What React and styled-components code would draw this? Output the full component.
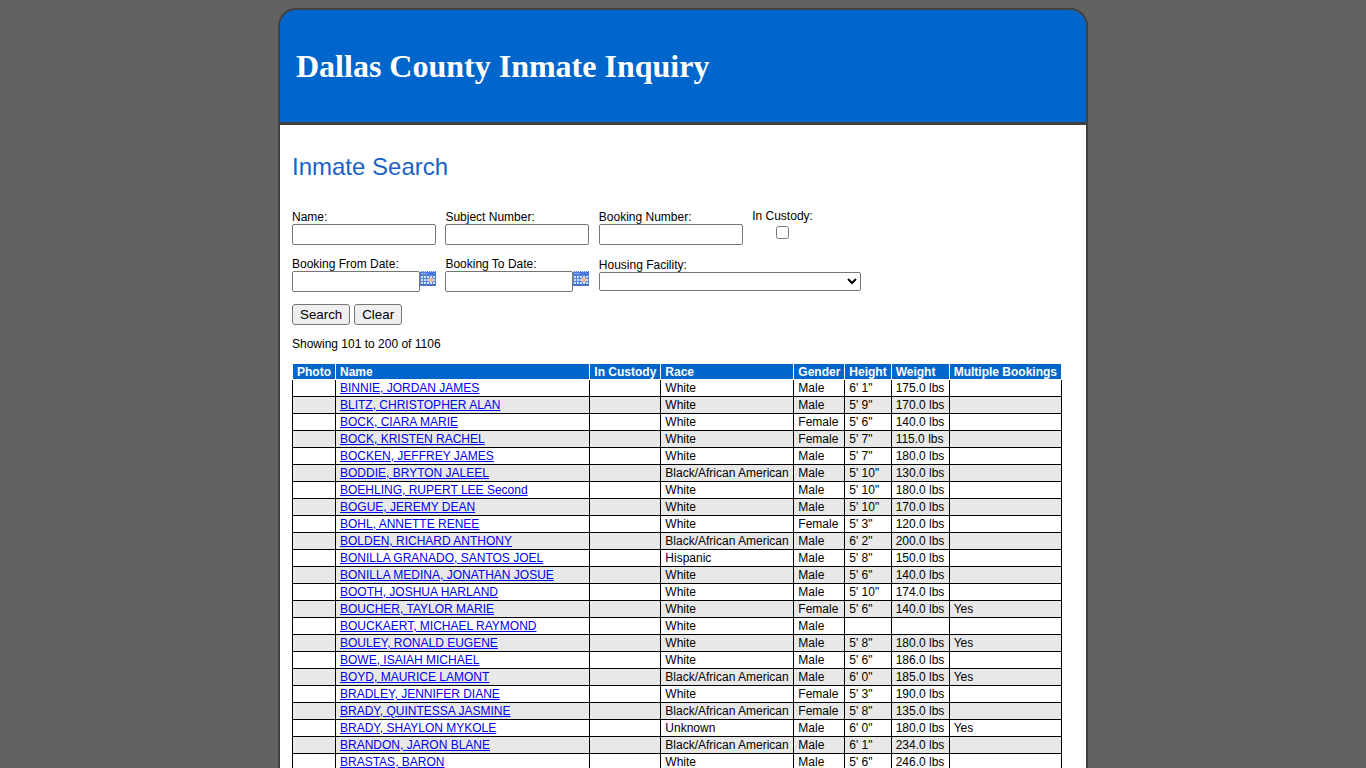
import React from 'react';
import styled, { createGlobalStyle } from 'styled-components';

const GlobalStyle = createGlobalStyle`
	body {
		margin: 8px;
		background: #616161;
		color: #000;
		font-family: Arial, "Liberation Sans", sans-serif;
		font-size: 12px;
		line-height: 14px;
	}
`;
const Page = styled.div`
	box-sizing: border-box;
	max-width: 810px;
	margin: 0 auto;
	border: 2px solid #404040;
	border-radius: 18px 18px 0 0;
`;
const Header = styled.header`
	display: flex;
	align-items: center;
	height: 112px;
	padding: 0 16px;
	background: #0066cc;
	border-bottom: 3px solid #404040;
	border-radius: 16px 16px 0 0;
`;
const SiteTitle = styled.h1`
	margin: 0;
	color: #fff;
	font-family: "Times New Roman", "Liberation Serif", serif;
	font-size: 32px;
	line-height: 36px;
`;
const Content = styled.main`
	padding: 28px 12px 12px;
	background: #fff;
`;
const PageTitle = styled.h2`
	margin: 0 0 29px;
	color: #1b62c4;
	font-size: 24px;
	font-weight: normal;
	line-height: 28px;
`;
const SearchForm = styled.form`
	display: grid;
	grid-template-columns: repeat(5, 1fr);
	row-gap: 12px;
	max-width: 767px;
`;
const Field = styled.div`
	display: flex;
	flex-direction: column;
	align-items: flex-start;
	justify-content: center;
	grid-column: span ${props => props.$span || 1};
`;
const CheckField = styled.div`
	display: flex;
	flex-direction: column;
	align-items: center;
	justify-self: start;
	line-height: 12px;
`;
const TextBox = styled.input`
	box-sizing: border-box;
	width: ${props => props.$short ? '128px' : '144px'};
	height: 21px;
	margin: 0;
	padding: 1px 2px;
	border: 1px solid #767676;
	border-radius: 2px;
	background: #fff;
`;
const CheckBox = styled.input`
	width: 13px;
	height: 13px;
	margin: 4px 3px 3px;
`;
const Select = styled.select`
	box-sizing: border-box;
	width: 262px;
	height: 19px;
	margin: 0;
	border: 1px solid #767676;
	border-radius: 2px;
	background-color: #fff;
`;
const DateRow = styled.div`
	display: flex;
	align-items: flex-start;
`;
const DateButton = styled.button`
	width: 16px;
	height: 15px;
	padding: 0;
	border: none;
	background: none;
	cursor: pointer;
	svg {
		display: block;
	}
`;
const Actions = styled.div`
	display: flex;
	grid-column: 1 / -1;
	gap: 4px;
`;
const Button = styled.button`
	height: 21px;
	padding: 0 7px;
	border: 1px solid #767676;
	border-radius: 3px;
	background: #efefef;
	color: #000;
	font-family: Arial, "Liberation Sans", sans-serif;
`;
const Summary = styled.p`
	margin: 12px 0;
`;
const Table = styled.table`
	width: 100%;
	max-width: 770px;
	border-collapse: collapse;
`;
const HeadCell = styled.th`
	width: ${props => props.$width}px;
	padding: 1px 4px 0;
	border: 1px solid #fff;
	background: #0066cc;
	color: #fff;
	line-height: 14px;
	text-align: left;
	white-space: nowrap;
`;
const Row = styled.tr`
	background: #fff;
	&:nth-child(even) {
		background: #e8e8e8;
	}
`;
const Cell = styled.td`
	height: 16px;
	padding: 0 4px;
	border: 1px solid #000;
	line-height: 16px;
	white-space: nowrap;
	tr:first-child > & {
		border-top-color: #fff;
	}
`;
const NameLink = styled.a`
	color: #0000ee;
`;

const columns = [
	['Photo', 34],
	['Name', 247],
	['In Custody', 62],
	['Race', 124],
	['Gender', 42],
	['Height', 36],
	['Weight', 49],
	['Multiple Bookings', 103],
];

const inmates = [
	['BINNIE, JORDAN JAMES', 'White', 'Male', '6\' 1"', '175.0 lbs'],
	['BLITZ, CHRISTOPHER ALAN', 'White', 'Male', '5\' 9"', '170.0 lbs'],
	['BOCK, CIARA MARIE', 'White', 'Female', '5\' 6"', '140.0 lbs'],
	['BOCK, KRISTEN RACHEL', 'White', 'Female', '5\' 7"', '115.0 lbs'],
	['BOCKEN, JEFFREY JAMES', 'White', 'Male', '5\' 7"', '180.0 lbs'],
	['BODDIE, BRYTON JALEEL', 'Black/African American', 'Male', '5\' 10"', '130.0 lbs'],
	['BOEHLING, RUPERT LEE Second', 'White', 'Male', '5\' 10"', '180.0 lbs'],
	['BOGUE, JEREMY DEAN', 'White', 'Male', '5\' 10"', '170.0 lbs'],
	['BOHL, ANNETTE RENEE', 'White', 'Female', '5\' 3"', '120.0 lbs'],
	['BOLDEN, RICHARD ANTHONY', 'Black/African American', 'Male', '6\' 2"', '200.0 lbs'],
	['BONILLA GRANADO, SANTOS JOEL', 'Hispanic', 'Male', '5\' 8"', '150.0 lbs'],
	['BONILLA MEDINA, JONATHAN JOSUE', 'White', 'Male', '5\' 6"', '140.0 lbs'],
	['BOOTH, JOSHUA HARLAND', 'White', 'Male', '5\' 10"', '174.0 lbs'],
	['BOUCHER, TAYLOR MARIE', 'White', 'Female', '5\' 6"', '140.0 lbs', 'Yes'],
	['BOUCKAERT, MICHAEL RAYMOND', 'White', 'Male', '', ''],
	['BOULEY, RONALD EUGENE', 'White', 'Male', '5\' 8"', '180.0 lbs', 'Yes'],
	['BOWE, ISAIAH MICHAEL', 'White', 'Male', '5\' 6"', '186.0 lbs'],
	['BOYD, MAURICE LAMONT', 'Black/African American', 'Male', '6\' 0"', '185.0 lbs', 'Yes'],
	['BRADLEY, JENNIFER DIANE', 'White', 'Female', '5\' 3"', '190.0 lbs'],
	['BRADY, QUINTESSA JASMINE', 'Black/African American', 'Female', '5\' 8"', '135.0 lbs'],
	['BRADY, SHAYLON MYKOLE', 'Unknown', 'Male', '6\' 0"', '180.0 lbs', 'Yes'],
	['BRANDON, JARON BLANE', 'Black/African American', 'Male', '6\' 1"', '234.0 lbs'],
	['BRASTAS, BARON', 'White', 'Male', '5\' 6"', '246.0 lbs'],
];

function CalendarIcon() {
	return (
		<svg width="16" height="15" viewBox="0 0 16 15" aria-hidden="true">
			<rect width="16" height="15" fill="#5585dc" />
			<path d="M0 .5h16" stroke="#dfe9fc" strokeDasharray="1 1" />
			<rect y="1" width="16" height="3" fill="#4a78e0" />
			<path d="M1 2.5h6" stroke="#86a9f0" />
			<path d="M1 6h14M1 9h14M1 12h14" stroke="#cfe0fa" strokeWidth="2" strokeDasharray="2 1" />
			<rect x="9" y="7" width="4" height="4" fill="#f0b58c" />
			<path d="M0 14h16" stroke="#4a72c4" strokeWidth="2" />
		</svg>
	);
}

function DateField({ id, label }) {
	return (
		<Field>
			<label htmlFor={id}>{label}</label>
			<DateRow>
				<TextBox id={id} type="text" $short />
				<DateButton type="button" aria-label={'Choose ' + label.replace(':', '')}>
					<CalendarIcon />
				</DateButton>
			</DateRow>
		</Field>
	);
}

function TextField({ id, label }) {
	return (
		<Field>
			<label htmlFor={id}>{label}</label>
			<TextBox id={id} type="text" />
		</Field>
	);
}

export default function App() {
	return (
		<>
			<GlobalStyle />
			<Page>
				<Header>
					<SiteTitle>Dallas County Inmate Inquiry</SiteTitle>
				</Header>
				<Content>
					<PageTitle>Inmate Search</PageTitle>
					<SearchForm onSubmit={e => e.preventDefault()}>
						<TextField id="name" label="Name:" />
						<TextField id="subject" label="Subject Number:" />
						<TextField id="booking" label="Booking Number:" />
						<CheckField>
							<label htmlFor="custody">In Custody:</label>
							<CheckBox id="custody" type="checkbox" />
						</CheckField>
						<span />
						<DateField id="from" label="Booking From Date:" />
						<DateField id="to" label="Booking To Date:" />
						<Field $span={3}>
							<label htmlFor="facility">Housing Facility:</label>
							<Select id="facility">
								<option value=""></option>
							</Select>
						</Field>
						<Actions>
							<Button type="submit">Search</Button>
							<Button type="reset">Clear</Button>
						</Actions>
					</SearchForm>
					<Summary>Showing 101 to 200 of 1106</Summary>
					<Table>
						<thead>
							<tr>
								{columns.map(([title, width]) => (
									<HeadCell key={title} $width={width}>{title}</HeadCell>
								))}
							</tr>
						</thead>
						<tbody>
							{inmates.map(([name, race, gender, height, weight, multiple]) => (
								<Row key={name}>
									<Cell />
									<Cell><NameLink href="#">{name}</NameLink></Cell>
									<Cell />
									<Cell>{race}</Cell>
									<Cell>{gender}</Cell>
									<Cell>{height}</Cell>
									<Cell>{weight}</Cell>
									<Cell>{multiple}</Cell>
								</Row>
							))}
						</tbody>
					</Table>
				</Content>
			</Page>
		</>
	);
}
